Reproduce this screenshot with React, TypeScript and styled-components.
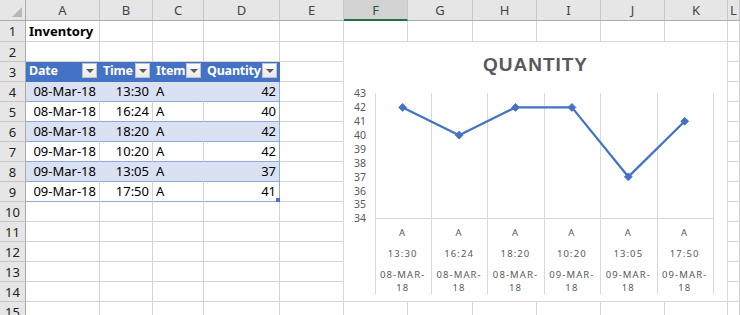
import * as React from 'react'
import styled, { createGlobalStyle } from 'styled-components'

const GlobalStyle = createGlobalStyle`
  html, body {
    margin: 0;
    padding: 0;
    background: #ffffff;
  }
  body {
    width: 740px;
    height: 315px;
    overflow: hidden;
    font-family: "Noto Sans", "Liberation Sans", sans-serif;
  }
`

const COLS = '26px 74px 53px 51px 76px 64px 64px 65px 64px 64px 64px 63px 1fr'
const LETTERS = ['A', 'B', 'C', 'D', 'E', 'F', 'G', 'H', 'I', 'J', 'K', 'L']

const Sheet = styled.div`
  position: relative;
  width: 740px;
  height: 315px;
  overflow: hidden;
  background: #fff;
`

const Row = styled.div<{ $h: number }>`
  display: grid;
  grid-template-columns: ${COLS};
  height: ${p => p.$h}px;
`

const Corner = styled.div`
  position: relative;
  background: #e6e6e6;
  border-right: 1px solid #ababab;
  border-bottom: 1px solid #ababab;
  box-sizing: border-box;

  &::after {
    content: '';
    position: absolute;
    right: 3px;
    bottom: 3px;
    border-style: solid;
    border-width: 0 0 10px 10px;
    border-color: transparent transparent #b8b8b8 transparent;
  }
`

const ColHead = styled.div<{ $selected?: boolean }>`
  display: flex;
  align-items: center;
  justify-content: center;
  box-sizing: border-box;
  background: ${p => (p.$selected ? '#d2d2d2' : '#e6e6e6')};
  border-right: 1px solid #c6c6c6;
  border-bottom: ${p => (p.$selected ? '2px solid #217346' : '1px solid #ababab')};
  color: ${p => (p.$selected ? '#1d5b38' : '#444444')};
  font-size: 13px;
  padding-top: ${p => (p.$selected ? '1px' : '0')};
`

const RowHead = styled.div`
  display: flex;
  align-items: center;
  justify-content: center;
  box-sizing: border-box;
  background: #e6e6e6;
  border-right: 1px solid #ababab;
  border-bottom: 1px solid #c6c6c6;
  color: #222222;
  font-size: 13px;
`

type Tone = 'plain' | 'head' | 'band' | 'body'

const toneBg: Record<Tone, string> = {
  plain: '#ffffff',
  head: '#4472c4',
  band: '#d9e1f2',
  body: '#ffffff',
}

const Cell = styled.div<{ $tone?: Tone; $align?: 'left' | 'right'; $bold?: boolean; $edge?: boolean }>`
  position: relative;
  display: flex;
  align-items: flex-end;
  justify-content: ${p => (p.$align === 'right' ? 'flex-end' : 'flex-start')};
  box-sizing: border-box;
  padding: 0 3px 1px 3px;
  background: ${p => toneBg[p.$tone || 'plain']};
  color: ${p => (p.$tone === 'head' ? '#ffffff' : '#000000')};
  font-size: 13px;
  font-weight: ${p => (p.$bold ? 700 : 400)};
  line-height: 18px;
  white-space: nowrap;
  border-right: 1px solid
    ${p =>
      p.$tone === 'head'
        ? '#4472c4'
        : p.$edge
          ? '#8ea9db'
          : p.$tone === 'band'
            ? '#d9e1f2'
            : '#d4d4d4'};
  border-bottom: 1px solid
    ${p =>
      p.$tone === 'head' ? '#4472c4' : p.$tone === 'band' || p.$tone === 'body' ? '#8ea9db' : '#d4d4d4'};
`

const HeadLabel = styled.span`
  flex: 1;
  font-size: 12.5px;
  letter-spacing: -0.2px;
`

const FilterButton = styled.span`
  align-self: flex-start;
  flex: none;
  margin: 1px -1px 0 0;
  width: 15px;
  height: 15px;
  box-sizing: border-box;
  display: flex;
  align-items: center;
  justify-content: center;
  background: linear-gradient(#fbfbfb, #e9e9e9);
  border: 1px solid #c3c3c3;

  &::after {
    content: '';
    border-style: solid;
    border-width: 4px 4px 0 4px;
    border-color: #5a5a5a transparent transparent transparent;
    margin-top: 1px;
  }
`

const ResizeHandle = styled.span`
  position: absolute;
  right: -1px;
  bottom: -1px;
  width: 4px;
  height: 4px;
  background: #4472c4;
`

const ChartCard = styled.div`
  position: absolute;
  left: 343px;
  top: 41px;
  width: 385px;
  height: 261px;
  box-sizing: border-box;
  background: #ffffff;
  border: 1px solid #d9d9d9;
  display: flex;
  flex-direction: column;
`

const ChartTitle = styled.div`
  height: 48px;
  box-sizing: border-box;
  padding-bottom: 3px;
  display: flex;
  align-items: center;
  justify-content: center;
  font-family: "Liberation Sans", Arial, sans-serif;
  font-weight: 700;
  font-size: 19px;
  letter-spacing: 1px;
  color: #595959;
`

const Plot = styled.svg`
  display: block;
  overflow: visible;
  font-family: "Noto Sans", "Liberation Sans", sans-serif;
`

type Entry = { date: string; time: string; item: string; qty: number }

const data: Entry[] = [
  { date: '08-Mar-18', time: '13:30', item: 'A', qty: 42 },
  { date: '08-Mar-18', time: '16:24', item: 'A', qty: 40 },
  { date: '08-Mar-18', time: '18:20', item: 'A', qty: 42 },
  { date: '09-Mar-18', time: '10:20', item: 'A', qty: 42 },
  { date: '09-Mar-18', time: '13:05', item: 'A', qty: 37 },
  { date: '09-Mar-18', time: '17:50', item: 'A', qty: 41 },
]

const EmptyCells: React.FC<{ from: number }> = ({ from }) => (
  <>
    {LETTERS.slice(from).map(l => (
      <Cell key={l} />
    ))}
  </>
)

const QuantityChart: React.FC = () => {
  const left = 30.5
  const step = 56.4
  const top = 3.5
  const unit = 125 / 9
  const yOf = (v: number) => top + (43 - v) * unit
  const xs = data.map((_, i) => left + step * i + step / 2)
  const ticks = [43, 42, 41, 40, 39, 38, 37, 36, 35, 34]
  const line = data.map((d, i) => `${xs[i]},${yOf(d.qty)}`).join(' ')

  return (
    <ChartCard>
      <ChartTitle>QUANTITY</ChartTitle>
      <Plot width={383} height={211} viewBox="0 0 383 211">
        {Array.from({ length: 7 }, (_, i) => {
          const x = Math.round(left + step * i) + 0.5
          return <line key={i} x1={x} x2={x} y1={3} y2={204} stroke="#d9d9d9" strokeWidth={1} />
        })}
        <line x1={left} x2={left + step * 6} y1={128.5} y2={128.5} stroke="#d9d9d9" strokeWidth={1} />
        {ticks.map(t => (
          <text key={t} x={22} y={yOf(t) + 3.8} textAnchor="end" fontSize={10.5} fill="#595959">
            {t}
          </text>
        ))}
        <polyline points={line} fill="none" stroke="#4472c4" strokeWidth={2.25} strokeLinejoin="round" />
        {data.map((d, i) => {
          const x = xs[i]
          const y = yOf(d.qty)
          return (
            <polygon
              key={i}
              points={`${x},${y - 4} ${x + 4},${y} ${x},${y + 4} ${x - 4},${y}`}
              fill="#4472c4"
              stroke="#4472c4"
              strokeWidth={0.75}
            />
          )
        })}
        {data.map((d, i) => (
          <g key={i} fontSize={9.5} fill="#595959" letterSpacing={1.1} textAnchor="middle">
            <text x={xs[i]} y={145.5}>{d.item}</text>
            <text x={xs[i]} y={166.5}>{d.time}</text>
            <text x={xs[i]} y={187.5}>{d.date.toUpperCase().slice(0, 7)}</text>
            <text x={xs[i]} y={200.5}>{d.date.slice(7)}</text>
          </g>
        ))}
      </Plot>
    </ChartCard>
  )
}

export default function App() {
  const headers = ['Date', 'Time', 'Item', 'Quantity']

  return (
    <>
      <GlobalStyle />
      <Sheet>
        <Row $h={21}>
          <Corner />
          {LETTERS.map(l => (
            <ColHead key={l} $selected={l === 'F'}>
              {l}
            </ColHead>
          ))}
        </Row>

        <Row $h={21}>
          <RowHead>1</RowHead>
          <Cell $bold>Inventory</Cell>
          <EmptyCells from={1} />
        </Row>

        <Row $h={20}>
          <RowHead>2</RowHead>
          <EmptyCells from={0} />
        </Row>

        <Row $h={20}>
          <RowHead>3</RowHead>
          {headers.map((h, i) => (
            <Cell key={h} $tone="head" $bold $edge={i === 3}>
              <HeadLabel>{h}</HeadLabel>
              <FilterButton />
            </Cell>
          ))}
          <EmptyCells from={4} />
        </Row>

        {data.map((d, i) => {
          const tone: Tone = i % 2 === 0 ? 'band' : 'body'
          const last = i === data.length - 1
          return (
            <Row $h={20} key={i}>
              <RowHead>{i + 4}</RowHead>
              <Cell $tone={tone} $align="right">{d.date}</Cell>
              <Cell $tone={tone} $align="right">{d.time}</Cell>
              <Cell $tone={tone}>{d.item}</Cell>
              <Cell $tone={tone} $align="right" $edge>
                {d.qty}
                {last && <ResizeHandle />}
              </Cell>
              <EmptyCells from={4} />
            </Row>
          )
        })}

        {[10, 11, 12, 13, 14, 15].map(n => (
          <Row $h={20} key={n}>
            <RowHead>{n}</RowHead>
            <EmptyCells from={0} />
          </Row>
        ))}

        <QuantityChart />
      </Sheet>
    </>
  )
}
